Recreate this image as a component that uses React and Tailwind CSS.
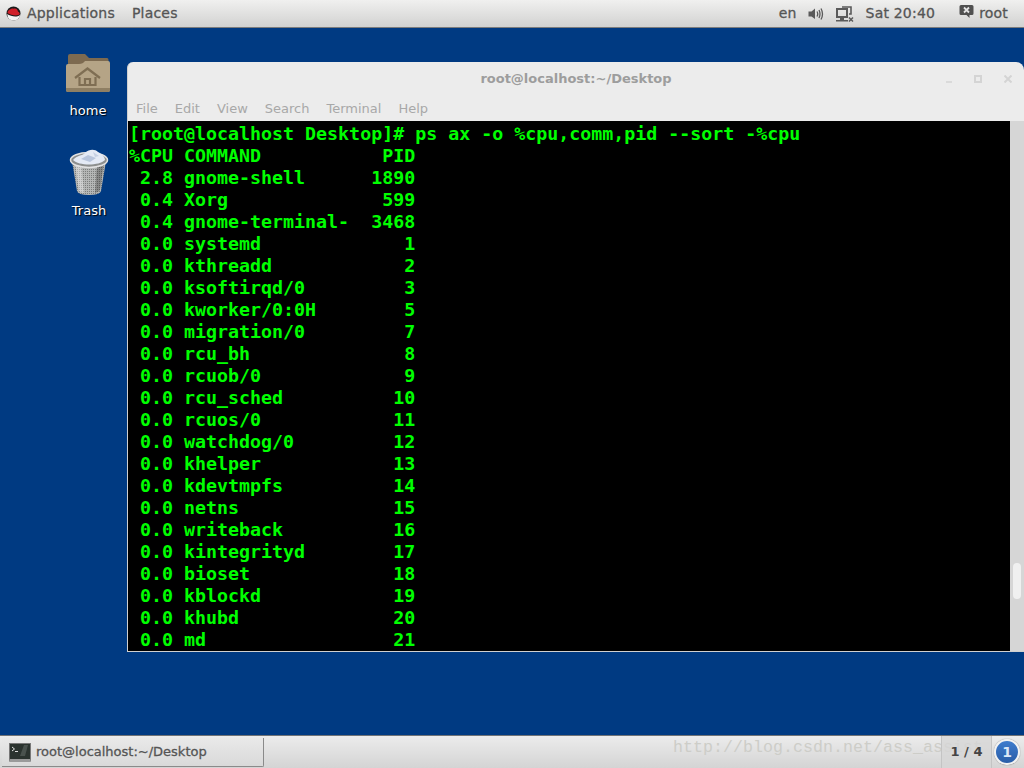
import React from 'react';

const rows = [
  ' 2.8 gnome-shell      1890',
  ' 0.4 Xorg              599',
  ' 0.4 gnome-terminal-  3468',
  ' 0.0 systemd             1',
  ' 0.0 kthreadd            2',
  ' 0.0 ksoftirqd/0         3',
  ' 0.0 kworker/0:0H        5',
  ' 0.0 migration/0         7',
  ' 0.0 rcu_bh              8',
  ' 0.0 rcuob/0             9',
  ' 0.0 rcu_sched          10',
  ' 0.0 rcuos/0            11',
  ' 0.0 watchdog/0         12',
  ' 0.0 khelper            13',
  ' 0.0 kdevtmpfs          14',
  ' 0.0 netns              15',
  ' 0.0 writeback          16',
  ' 0.0 kintegrityd        17',
  ' 0.0 bioset             18',
  ' 0.0 kblockd            19',
  ' 0.0 khubd              20',
  ' 0.0 md                 21',
];

const RedHat = () => (
  <svg width="15" height="15" viewBox="0 0 15 15">
    <circle cx="7.5" cy="7.5" r="7" fill="#1a1a1a" />
    <path d="M1 8 C2 10 1 14 7.5 14.5 C12 14.5 14 11 14 9 C10 12 5 10 1 8Z" fill="#f4f4f4" />
    <path d="M1.5 7 C1.5 5 3 3.5 5 3 C6.5 2 7 3 8 2.6 C10 2 11.5 3 12 5.5 C13.5 6.5 14 7.5 13.5 8.5 C10 10.5 5 9 1.5 7Z" fill="#d0202a" />
  </svg>
);

const Folder = () => (
  <svg width="46" height="42" viewBox="0 0 46 42">
    <path d="M3 4 Q3 2 5 2 H20 L24 6 H42 Q43.5 6 43.5 8 V14 H3Z" fill="#7d6a50" />
    <path d="M1 14 Q1 12 3 12 L14 12 Q18 12 20 9 H43 Q45 9 45 11 V38 Q45 40 43 40 H3 Q1 40 1 38Z" fill="#b5a486" />
    <path d="M1 36 H45 V38 Q45 40 43 40 H3 Q1 40 1 38Z" fill="#8f7f63" />
    <path d="M10 26 L22.5 16.5 L35 26 M14.5 25 V33 H30.5 V25 M20 33 V27 H25 V33" fill="none" stroke="#7f6e53" strokeWidth="2.2" />
  </svg>
);

const TrashCan = () => (
  <svg width="40" height="48" viewBox="0 0 40 48">
    <defs>
      <pattern id="mesh" width="2" height="2" patternUnits="userSpaceOnUse">
        <rect width="2" height="2" fill="#b4b6b5" />
        <rect width="1" height="1" fill="#7c7e7d" />
      </pattern>
    </defs>
    <path d="M3 12 L8 42 Q9 46 20 46 Q31 46 32 42 L37 12Z" fill="url(#mesh)" />
    <path d="M6 14 L10 42 Q12 44 15 44 L12 14Z" fill="#ffffff" opacity="0.35" />
    <path d="M28 14 L26 44 Q30 43 31 41 L35 14Z" fill="#000000" opacity="0.25" />
    <ellipse cx="20" cy="11" rx="18.5" ry="7.5" fill="#8d8f8e" stroke="#e2e2e2" strokeWidth="1.5" />
    <path d="M4 11 C8 6 13 7 16 4 C20 0 26 0 29 3 C33 5 36 8 36 11 C30 17 10 17 4 11Z" fill="#e4eaf5" />
    <path d="M12 10 L19 6 L27 9 L21 13Z" fill="#b8c5dc" />
    <path d="M24 3 L30 7 L26 8Z" fill="#c5d0e3" />
  </svg>
);

const Speaker = () => (
  <svg width="16" height="14" viewBox="0 0 16 14" fill="none">
    <path d="M0.5 4.5 H3.5 L7 1.5 V12 L3.5 9.5 H0.5Z" fill="#5a5a5a" />
    <path d="M9 4.5 Q10.5 7 9 9.5 M11 3 Q13 7 11 11 M13 1.5 Q16 7 13 12.5" stroke="#5a5a5a" strokeWidth="1.3" />
  </svg>
);

const Network = () => (
  <svg width="18" height="16" viewBox="0 0 18 16" fill="none">
    <rect x="1" y="3" width="10" height="8" stroke="#5a5a5a" strokeWidth="2" />
    <path d="M0 14 H12 V15.5 H0Z M4 11 H8 V14 H4Z" fill="#5a5a5a" />
    <path d="M6 1 H15 V8 H13" stroke="#5a5a5a" strokeWidth="1.6" />
    <path d="M13 11.5 L17 15.5 M17 11.5 L13 15.5" stroke="#5a5a5a" strokeWidth="1.5" />
  </svg>
);

const UserBadge = () => (
  <svg width="15" height="15" viewBox="0 0 15 15">
    <path d="M2 1 H13 Q14.5 1 14.5 2.5 V9.5 Q14.5 11 13 11 H10.5 V14 L7.5 11 H2 Q0.5 11 0.5 9.5 V2.5 Q0.5 1 2 1Z" fill="#505050" />
    <path d="M5 3.5 L10 8.5 M10 3.5 L5 8.5" stroke="#e4e4e4" strokeWidth="1.8" />
  </svg>
);

const TermIcon = () => (
  <div className="w-[22px] h-[19px] bg-[#2c2c2c] border border-[#777] rounded-[1px] border-b-[3px] border-b-[#9a9a9a] flex">
    <svg width="20" height="15" viewBox="0 0 20 15" fill="none">
      <rect width="20" height="15" fill="#2b332f" />
      <path d="M2 3 L4.5 5 L2 7" stroke="#e4e4e4" />
      <path d="M5 7.5 H8" stroke="#ddd" />
      <path d="M10 12 L14 1 H18 L15 12Z" fill="#4a524e" />
    </svg>
  </div>
);

export default function App() {
  return (
    <div
      className="w-[1024px] h-[768px] flex flex-col overflow-hidden bg-[#003a82]"
      style={{ fontFamily: '"DejaVu Sans", sans-serif' }}
    >
      {/* top panel */}
      <div className="h-[28px] shrink-0 flex items-center bg-gradient-to-b from-[#f0f0ef] to-[#d2d2d1] border-b border-[#7c7c7c] text-[14px] text-[#555] tracking-[0.2px] [-webkit-text-stroke:0.3px_#555]">
        <div className="ml-[6px] mr-[6px] flex"><RedHat /></div>
        <span>Applications</span>
        <span className="ml-[17px]">Places</span>
        <span className="ml-auto">en</span>
        <div className="ml-[11px] flex"><Speaker /></div>
        <div className="ml-[12px] flex"><Network /></div>
        <span className="ml-[12px]">Sat 20:40</span>
        <div className="ml-[24px] flex mb-[4px]"><UserBadge /></div>
        <span className="ml-[5px] mr-[16px]">root</span>
      </div>

      {/* desktop */}
      <div className="relative flex-1 bg-[#003a82]">
        <div className="absolute left-[58px] top-[24px] w-[60px] flex flex-col items-center text-white text-[13px] [text-shadow:1px_1px_1px_#000]">
          <Folder />
          <span className="mt-[7px]">home</span>
        </div>
        <div className="absolute left-[59px] top-[121px] w-[60px] flex flex-col items-center text-white text-[13px] [text-shadow:1px_1px_1px_#000]">
          <TrashCan />
          <span className="mt-[4px]">Trash</span>
        </div>

        {/* terminal window */}
        <div className="absolute left-[127px] top-[34px] w-[897px] h-[590px] rounded-t-[6px] rounded-tr-[8px] bg-[#ececec] border-l border-b border-[#d0d0d0] flex flex-col overflow-hidden">
          <div className="h-[33px] shrink-0 flex items-center relative">
            <span className="flex-1 text-center text-[13px] font-bold text-[#9d9d9d]">root@localhost:~/Desktop</span>
            <div className="absolute right-[12px] top-[13px] flex items-center gap-[22px]">
              <div className="w-[6px] h-[8px] border-b-2 border-[#dadada]" />
              <div className="w-[8px] h-[8px] border-2 border-[#d4d4d4]" />
              <svg width="8" height="8" viewBox="0 0 8 8"><path d="M0.5 0.5 L7.5 7.5 M7.5 0.5 L0.5 7.5" stroke="#d4d4d4" strokeWidth="2" /></svg>
            </div>
          </div>
          <div className="h-[26px] shrink-0 flex items-center pl-[8px] pt-[1px] gap-[17px] text-[13px] text-[#a8a8a8]">
            <span>File</span>
            <span>Edit</span>
            <span>View</span>
            <span>Search</span>
            <span>Terminal</span>
            <span>Help</span>
          </div>
          <div className="flex-1 flex min-h-0">
            <div
              className="flex-1 bg-black text-[#00ff00] font-bold text-[18.3px] leading-[22px] pl-[1px] pt-[2px] whitespace-pre overflow-hidden"
              style={{ fontFamily: '"DejaVu Sans Mono", monospace' }}
            >
              <div>[root@localhost Desktop]# ps ax -o %cpu,comm,pid --sort -%cpu</div>
              <div>%CPU COMMAND           PID</div>
              {rows.map((r, i) => (
                <div key={i}>{r}</div>
              ))}
            </div>
            <div className="w-[14px] shrink-0 bg-[#d6d6d6] relative">
              <div className="absolute left-[3px] top-[442px] w-[8px] h-[36px] rounded-full bg-[#f0f0f0]" />
            </div>
          </div>
        </div>
      </div>

      {/* bottom panel */}
      <div className="h-[33px] shrink-0 relative flex items-center bg-gradient-to-b from-[#ececec] to-[#d4d4d4] border-t border-[#6f7276]">
        <div className="ml-[2px] mt-[1px] w-[262px] h-[29px] flex items-center border-r border-b border-[#8a8a8a] rounded-br-[2px] bg-gradient-to-b from-[#e9e9e9] to-[#d9d9d9] pl-[7px]">
          <TermIcon />
          <span className="ml-[5px] text-[13px] text-[#555] [-webkit-text-stroke:0.3px_#555]">root@localhost:~/Desktop</span>
        </div>
        <div
          className="absolute left-[673px] top-[-1px] text-[16.67px] leading-[26px] text-[#cdcdc8] whitespace-pre pointer-events-none"
          style={{ fontFamily: '"Liberation Mono", monospace' }}
        >
          http://blog.csdn.net/ass_assist
        </div>
        <div className="relative z-10 ml-auto mr-[32px] w-[51px] h-[32px] flex items-center justify-center bg-[#d6d6d6]/80 border-x border-[#c4c4c4] text-[13px] font-bold text-[#444]">1 / 4</div>
        <div className="absolute z-10 right-[4px] top-[3px] w-[26px] h-[26px] rounded-full border-2 border-[#f2f2f2] bg-gradient-to-b from-[#3f7ccd] to-[#2a5ea8] flex items-center justify-center text-[#dce8f7] text-[14px] font-bold shadow-[0_0_1px_#555]">1</div>
      </div>
    </div>
  );
}
